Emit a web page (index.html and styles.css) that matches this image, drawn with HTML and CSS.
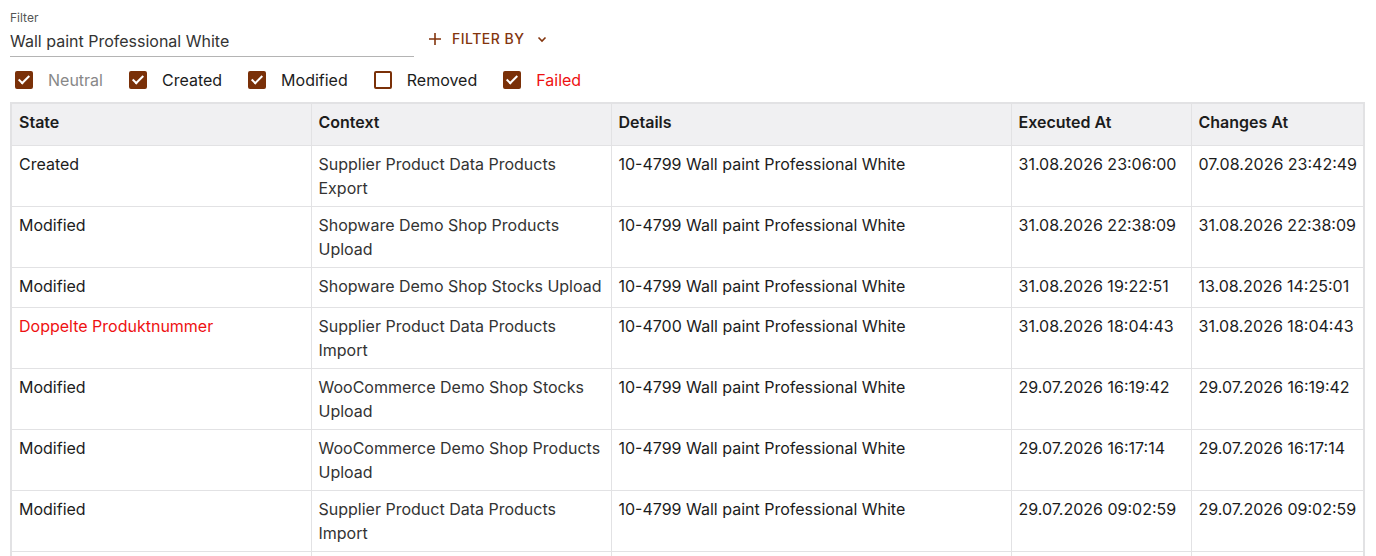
FILE: index.html
```html
<!DOCTYPE html>
<html>
<head>
    <title>Change Log</title>
    <link rel="stylesheet" href="styles.css">
</head>
<body>

<div class="filter_row">
    <div class="field">
        <div class="field_label">Filter</div>
        <div class="field_input">Wall paint Professional White</div>
    </div>
    <div class="filter_button">
        <svg class="plus" width="14" height="14" viewBox="0 0 14 14"><path d="M7 1v12M1 7h12" stroke="currentColor" stroke-width="1.6" fill="none"/></svg>
        <span>Filter by</span>
        <svg class="chevron" width="12" height="12" viewBox="0 0 12 12"><path d="M2.5 4.5L6 8l3.5-3.5" stroke="currentColor" stroke-width="1.6" fill="none"/></svg>
    </div>
</div>

<div class="states">
    <label class="state"><span class="box checked"></span><span class="neutral">Neutral</span></label>
    <label class="state"><span class="box checked"></span><span>Created</span></label>
    <label class="state"><span class="box checked"></span><span>Modified</span></label>
    <label class="state"><span class="box"></span><span>Removed</span></label>
    <label class="state"><span class="box checked"></span><span class="failed">Failed</span></label>
</div>

<table class="log">
    <colgroup>
        <col class="col_state">
        <col class="col_context">
        <col class="col_details">
        <col class="col_exec">
        <col class="col_changes">
    </colgroup>
    <tr>
        <th>State</th>
        <th>Context</th>
        <th>Details</th>
        <th>Executed At</th>
        <th>Changes At</th>
    </tr>
    <tr>
        <td>Created</td>
        <td class="context">Supplier Product Data Products Export</td>
        <td>10-4799 Wall paint Professional White</td>
        <td class="date">31.08.2026 23:06:00</td>
        <td class="date">07.08.2026 23:42:49</td>
    </tr>
    <tr>
        <td>Modified</td>
        <td class="context">Shopware Demo Shop Products Upload</td>
        <td>10-4799 Wall paint Professional White</td>
        <td class="date">31.08.2026 22:38:09</td>
        <td class="date">31.08.2026 22:38:09</td>
    </tr>
    <tr>
        <td>Modified</td>
        <td class="context">Shopware Demo Shop Stocks Upload</td>
        <td>10-4799 Wall paint Professional White</td>
        <td class="date">31.08.2026 19:22:51</td>
        <td class="date">13.08.2026 14:25:01</td>
    </tr>
    <tr>
        <td class="failed">Doppelte Produktnummer</td>
        <td class="context">Supplier Product Data Products Import</td>
        <td>10-4700 Wall paint Professional White</td>
        <td class="date">31.08.2026 18:04:43</td>
        <td class="date">31.08.2026 18:04:43</td>
    </tr>
    <tr>
        <td>Modified</td>
        <td class="context">WooCommerce Demo Shop Stocks Upload</td>
        <td>10-4799 Wall paint Professional White</td>
        <td class="date">29.07.2026 16:19:42</td>
        <td class="date">29.07.2026 16:19:42</td>
    </tr>
    <tr>
        <td>Modified</td>
        <td class="context">WooCommerce Demo Shop Products Upload</td>
        <td>10-4799 Wall paint Professional White</td>
        <td class="date">29.07.2026 16:17:14</td>
        <td class="date">29.07.2026 16:17:14</td>
    </tr>
    <tr>
        <td>Modified</td>
        <td class="context">Supplier Product Data Products Import</td>
        <td>10-4799 Wall paint Professional White</td>
        <td class="date">29.07.2026 09:02:59</td>
        <td class="date">29.07.2026 09:02:59</td>
    </tr>
    <tr class="more">
        <td></td>
        <td></td>
        <td></td>
        <td></td>
        <td></td>
    </tr>
</table>

</body>
</html>
```

FILE: styles.css
```css
body {
    margin: 0;
    padding: 10px 10px 0 10px;
    font-family: Inter, "Liberation Sans", sans-serif;
    font-size: 16px;
    color: #1c1c1c;
    overflow: hidden;
}

.filter_row {
    display: flex;
    align-items: flex-start;
}

.field {
    width: 404px;
}

.field_label {
    font-size: 12px;
    line-height: 14px;
    margin-top: 1px;
    color: #555;
}

.field_input {
    margin-top: 4px;
    line-height: 24px;
    padding-bottom: 3px;
    border-bottom: 1px solid #b4b4b4;
    color: #333;
}

.filter_button {
    display: flex;
    align-items: center;
    gap: 10px;
    margin-left: 14px;
    margin-top: 20px;
    color: #83350e;
    font-size: 14px;
    font-weight: 500;
    letter-spacing: 0.5px;
    text-transform: uppercase;
}

.filter_button .chevron {
    margin-left: 1px;
}

.states {
    display: flex;
    align-items: center;
    height: 36px;
    margin: 5px 0 4px 5px;
}

.state {
    display: flex;
    align-items: center;
    margin-right: 26px;
}

.box {
    width: 14px;
    height: 14px;
    border: 2px solid #7a3008;
    border-radius: 2px;
    margin-right: 15px;
    position: relative;
}

.box.checked {
    background: #7a3008;
}

.box.checked::after {
    content: "";
    position: absolute;
    left: 4px;
    top: 0px;
    width: 4px;
    height: 9px;
    border-right: 2px solid #fff;
    border-bottom: 2px solid #fff;
    transform: rotate(45deg);
}

.neutral {
    color: #888;
}

.failed {
    color: #ee1111;
}

.log {
    border-collapse: collapse;
    table-layout: fixed;
    width: 1353px;
    border: 2px solid #e2e2e4;
}

.col_state { width: 300px; }
.col_context { width: 300px; }
.col_details { width: 400px; }
.col_exec { width: 180px; }
.col_changes { width: 173px; }

.log th, .log td {
    border: 1px solid #e2e2e4;
    text-align: left;
    vertical-align: top;
    line-height: 24px;
    padding: 6px 4px 6px 7px;
}

.log th {
    background: #f0f0f2;
    font-weight: 600;
    padding-top: 6px;
    padding-bottom: 11px;
}

.log tr {
    height: 40px;
}

.log .context {
    color: #333;
}

.log .date {
    white-space: nowrap;
}
```
